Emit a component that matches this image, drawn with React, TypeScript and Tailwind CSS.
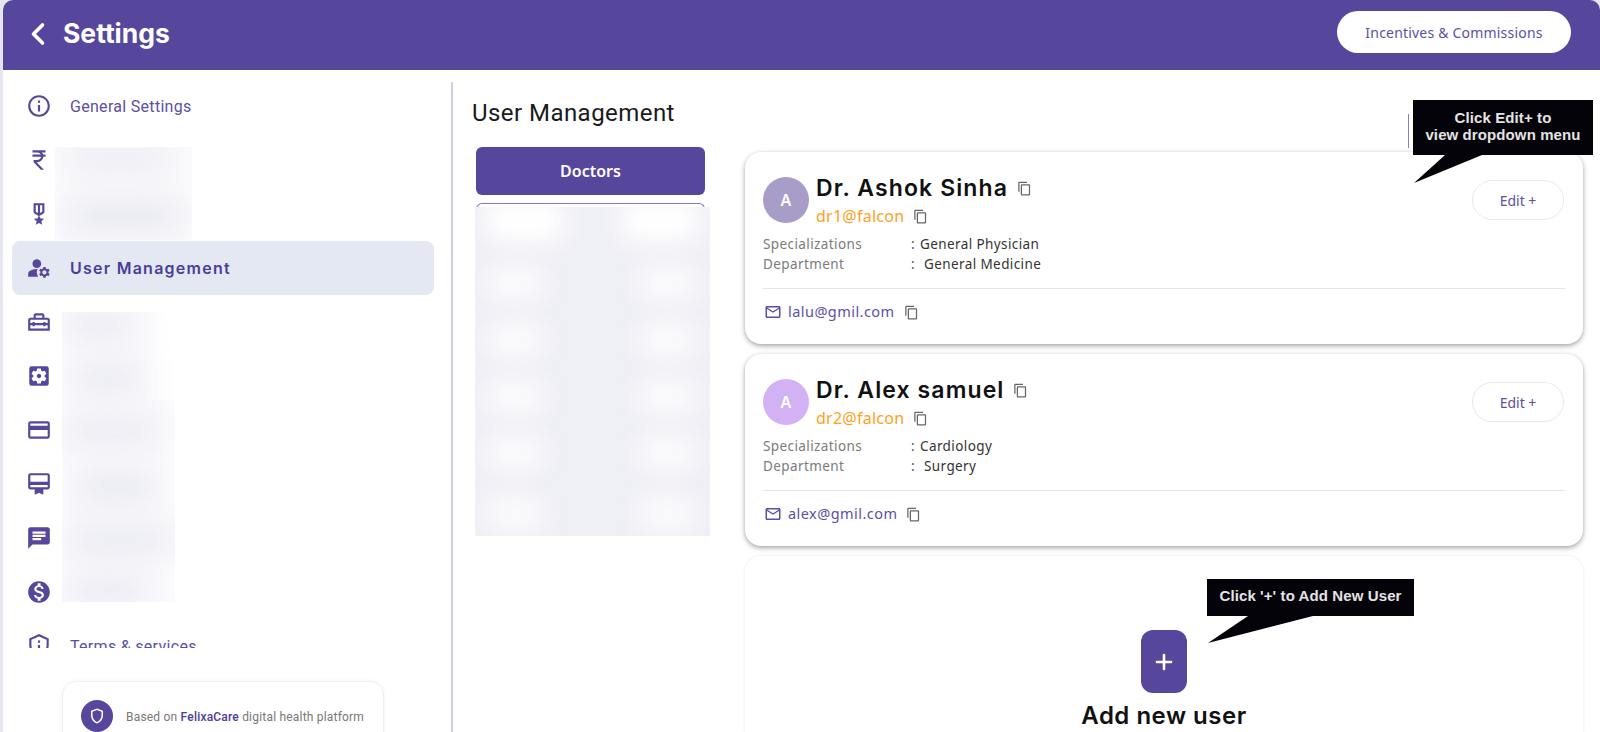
import type { ReactNode } from "react";
import { ChevronLeft, Plus } from "lucide-react";
import {
  MdChat,
  MdCurrencyRupee,
  MdManageAccounts,
  MdMonetizationOn,
  MdOutlineCardMembership,
  MdOutlineContentCopy,
  MdOutlineCreditCard,
  MdOutlineEmail,
  MdOutlineHomeRepairService,
  MdOutlineInfo,
  MdOutlineMilitaryTech,
  MdOutlinePrivacyTip,
  MdOutlineShield,
  MdSettingsApplications,
} from "react-icons/md";

const roboto = "font-['Roboto',sans-serif]";
const noto = "font-['Noto_Sans',sans-serif]";
const heading = "font-['Inter',sans-serif]";

const sideIcons = [
  { icon: <MdOutlineInfo />, label: "General Settings" },
  { icon: <MdCurrencyRupee /> },
  { icon: <MdOutlineMilitaryTech /> },
  { icon: <MdManageAccounts />, label: "User Management", active: true },
  { icon: <MdOutlineHomeRepairService /> },
  { icon: <MdSettingsApplications /> },
  { icon: <MdOutlineCreditCard /> },
  { icon: <MdOutlineCardMembership /> },
  { icon: <MdChat /> },
  { icon: <MdMonetizationOn /> },
  { icon: <MdOutlinePrivacyTip />, label: "Terms & services" },
];

const doctors = [
  {
    name: "Dr. Ashok Sinha",
    login: "dr1@falcon",
    spec: "General Physician",
    dept: "General Medicine",
    mail: "lalu@gmil.com",
    avatar: "bg-[#a89cc8]",
  },
  {
    name: "Dr. Alex samuel",
    login: "dr2@falcon",
    spec: "Cardiology",
    dept: "Surgery",
    mail: "alex@gmil.com",
    avatar: "bg-[#d3b1f5]",
  },
];

function Smudge({ className }: { className: string }) {
  return <span className={`absolute rounded-full bg-[#e3e3ee] blur-lg ${className}`} />;
}

function CopyIcon() {
  return <MdOutlineContentCopy className="shrink-0 text-[15px] text-[#666]" />;
}

function Callout({ className, children }: { className: string; children: ReactNode }) {
  return (
    <div
      className={`absolute z-10 flex flex-col items-center justify-center bg-[#05030a] pb-[4px] text-center font-['Liberation_Sans',sans-serif] text-[15px] leading-[17px] font-bold tracking-[0.1px] text-[#e4e4e4] ${className}`}
    >
      {children}
    </div>
  );
}

function DoctorCard({ doctor }: { doctor: (typeof doctors)[number] }) {
  return (
    <div className="h-[192px] shrink-0 rounded-2xl bg-white px-[18px] pt-[25px] shadow-[0_2px_5px_rgba(60,60,80,0.45),0_0_3px_rgba(60,60,80,0.06)]">
      <div className="flex items-start">
        <div
          className={`flex h-[46px] w-[46px] shrink-0 items-center justify-center rounded-full text-[16px] font-semibold text-white ${noto} ${doctor.avatar}`}
        >
          A
        </div>
        <div className="ml-[7px] flex-1">
          <div className="flex h-[22px] items-center">
            <span className={`text-[23px] leading-[22px] font-semibold tracking-[1.1px] text-[#111] ${heading}`}>{doctor.name}</span>
            <span className="ml-[9px]">
              <CopyIcon />
            </span>
          </div>
          <div className="mt-[7px] flex h-[20px] items-center">
            <span className={`text-[16px] tracking-[0.25px] text-[#ff9f1c] ${noto}`}>{doctor.login}</span>
            <span className="ml-[9px]">
              <CopyIcon />
            </span>
          </div>
        </div>
        <button
          type="button"
          className={`mt-[3px] mr-[1px] h-[40px] w-[92px] rounded-full border border-[#e9e7f5] text-[14px] text-[#5c4fa3] ${noto}`}
        >
          Edit +
        </button>
      </div>
      <div className={`mt-[8px] text-[13.5px] leading-[20px] tracking-[0.4px] ${noto}`}>
        <div className="flex">
          <span className="w-[148px] text-[#7b7b7b]">Specializations</span>
          <span className="w-[9px] text-[#555]">:</span>
          <span className="text-[#333]">{doctor.spec}</span>
        </div>
        <div className="flex">
          <span className="w-[148px] text-[#7b7b7b]">Department</span>
          <span className="w-[13px] text-[#555]">:</span>
          <span className="text-[#333]">{doctor.dept}</span>
        </div>
      </div>
      <div className="mt-[14px] border-t border-[#e6e6e6]" />
      <div className="mt-[13px] flex h-[20px] items-center">
        <MdOutlineEmail className="ml-px text-[18px] text-[#5c4fa3]" />
        <span className={`ml-[6px] text-[14.5px] tracking-[0.45px] text-[#5c4fa3] ${noto}`}>{doctor.mail}</span>
        <span className="ml-[9px]">
          <CopyIcon />
        </span>
      </div>
    </div>
  );
}

export default function App() {
  return (
    <div className="relative h-[732px] w-[1600px] overflow-hidden bg-[#e6e6f0] pl-[3px]">
      <div className="h-full overflow-hidden rounded-t-[10px] bg-white">
        <header className="flex h-[70px] items-center justify-between bg-[#56479c] pr-[29px] pl-[17px]">
          <div className="-mt-[3px] flex items-center">
            <ChevronLeft className="h-[36px] w-[36px] text-white" strokeWidth={2.4} />
            <span className={`ml-[7px] text-[26.5px] font-bold text-white ${heading}`}>Settings</span>
          </div>
          <button
            type="button"
            className={`-mt-[6px] h-[42px] w-[234px] rounded-full bg-white text-[14px] tracking-[0.2px] text-[#5c4fa3] ${noto}`}
          >
            Incentives &amp; Commissions
          </button>
        </header>

        <div className="flex h-[662px]">
          <aside className="relative mt-[12px] w-[450px] shrink-0 border-r-2 border-[#cfcfdc]">
            <div className="h-[566px] overflow-hidden">
              <nav className="-mt-[3px] px-[9px]">
                {sideIcons.map((item, i) => (
                  <div
                    key={i}
                    className={`flex h-[54px] w-[422px] items-center rounded-lg pl-[14px] ${item.active ? "bg-[#e4e8f2]" : ""}`}
                  >
                    <span className="flex w-[44px] shrink-0 text-[26px] text-[#56479c]">{item.icon}</span>
                    {item.active ? (
                      <span className={`text-[16px] font-semibold tracking-[1.25px] text-[#4b3d99] ${heading}`}>{item.label}</span>
                    ) : (
                      <span className={`mt-[2px] text-[16px] tracking-[0.3px] text-[#5c4fa3] ${roboto}`}>{item.label}</span>
                    )}
                  </div>
                ))}
              </nav>
            </div>

            <div className="mt-[33px] ml-[59px] flex h-[80px] w-[322px] items-start rounded-[14px] border border-[#efeff3] pt-[18px] pl-[18px] shadow-[0_0_4px_rgba(0,0,0,0.05)]">
              <span className="flex h-[32px] w-[32px] items-center justify-center rounded-full bg-[#56479c] text-[18px] text-white">
                <MdOutlineShield />
              </span>
              <span className={`mt-[8px] ml-[13px] text-[12px] tracking-[0.2px] text-[#777] ${roboto}`}>
                Based on <span className="font-medium text-[#4b3d99]">FelixaCare</span> digital health platform
              </span>
            </div>

            {/* blurred-out menu labels */}
            <div className="absolute top-[65px] left-[52px] h-[93px] w-[137px] overflow-hidden bg-[#fbfbfd]">
              <Smudge className="top-0 left-[14px] h-[20px] w-[100px]" />
              <Smudge className="top-[56px] left-[10px] h-[26px] w-[118px]" />
            </div>
            <div className="absolute top-[230px] left-[59px] h-[290px] w-[113px] overflow-hidden bg-[#fcfcfe]">
              <Smudge className="top-[2px] left-0 h-[22px] w-[76px]" />
              <Smudge className="top-[54px] left-[8px] h-[24px] w-[76px]" />
              <Smudge className="top-[108px] left-0 h-[22px] w-[100px]" />
              <Smudge className="top-[162px] left-[12px] h-[26px] w-[84px]" />
              <Smudge className="top-[216px] left-[4px] h-[24px] w-[108px]" />
              <Smudge className="top-[268px] left-[4px] h-[24px] w-[84px]" />
              <span className="absolute top-0 right-0 h-[88px] w-[30px] bg-gradient-to-r from-transparent to-white" />
            </div>
          </aside>

          <main className="min-w-0 flex-1 pt-[26px] pl-[19px]">
            <h1 className={`text-[24px] leading-[34px] tracking-[0.45px] text-[#1a1a1a] ${roboto}`}>User Management</h1>
            <div className="flex">
              <div className="ml-[4px] w-[229px] shrink-0">
                <button
                  type="button"
                  className={`mt-[17px] h-[48px] w-full rounded-md bg-[#56479c] text-[16px] font-semibold text-white ${noto}`}
                >
                  Doctors
                </button>
                <div className="relative mt-[8px] h-[333px]">
                  <div className="h-[20px] rounded-t-md border-x border-t border-[#8477c4]" />
                  <div className="absolute top-[4px] -left-px h-[329px] w-[235px] overflow-hidden bg-[#efeff6]">
                    <span className="absolute -top-[8px] left-[8px] h-[44px] w-[84px] rounded-full bg-white blur-md" />
                    <span className="absolute -top-[8px] right-[8px] h-[44px] w-[84px] rounded-full bg-white blur-md" />
                    {[58, 115, 172, 228, 288].map((top) => (
                      <span key={top}>
                        <span
                          style={{ top }}
                          className="absolute left-[10px] h-[36px] w-[60px] rounded-full bg-[#fbfbfd] blur-md"
                        />
                        <span
                          style={{ top }}
                          className="absolute right-[13px] h-[36px] w-[60px] rounded-full bg-[#fbfbfd] blur-md"
                        />
                      </span>
                    ))}
                  </div>
                </div>
              </div>
              <div className="mt-[22px] ml-[40px] flex w-[838px] shrink-0 flex-col gap-[10px]">
                {doctors.map((doctor) => (
                  <DoctorCard key={doctor.name} doctor={doctor} />
                ))}
                <div className="flex h-[190px] shrink-0 flex-col items-center rounded-2xl bg-white pt-[74px] shadow-[0_0_3px_rgba(60,60,80,0.12)]">
                  <button
                    type="button"
                    className="flex h-[63px] w-[46px] items-center justify-center rounded-xl bg-[#56479c] text-white"
                  >
                    <Plus className="h-[24px] w-[24px]" strokeWidth={2.6} />
                  </button>
                  <span className={`mt-[5px] text-[24px] font-semibold tracking-[0.5px] text-[#111] ${heading}`}>Add new user</span>
                </div>
              </div>
            </div>
          </main>
        </div>
      </div>

      {/* annotation overlays */}
      <div className="absolute top-[114px] left-[1408px] h-[34px] w-px bg-[#8a80c0]" />
      <Callout className="top-[100px] left-[1413px] h-[55px] w-[180px]">
        <span>Click Edit+ to</span>
        <span>view dropdown menu</span>
      </Callout>
      <svg className="absolute top-[155px] left-[1414px] z-10" width="70" height="29" viewBox="0 0 70 29">
        <polygon points="31,0 0,28 68,0" fill="#05030a" />
      </svg>
      <Callout className="top-[579px] left-[1207px] h-[37px] w-[207px]">
        <span>Click '+' to Add New User</span>
      </Callout>
      <svg className="absolute top-[616px] left-[1208px] z-10" width="106" height="28" viewBox="0 0 106 28">
        <polygon points="40,0 0,27 105,0" fill="#05030a" />
      </svg>
    </div>
  );
}
